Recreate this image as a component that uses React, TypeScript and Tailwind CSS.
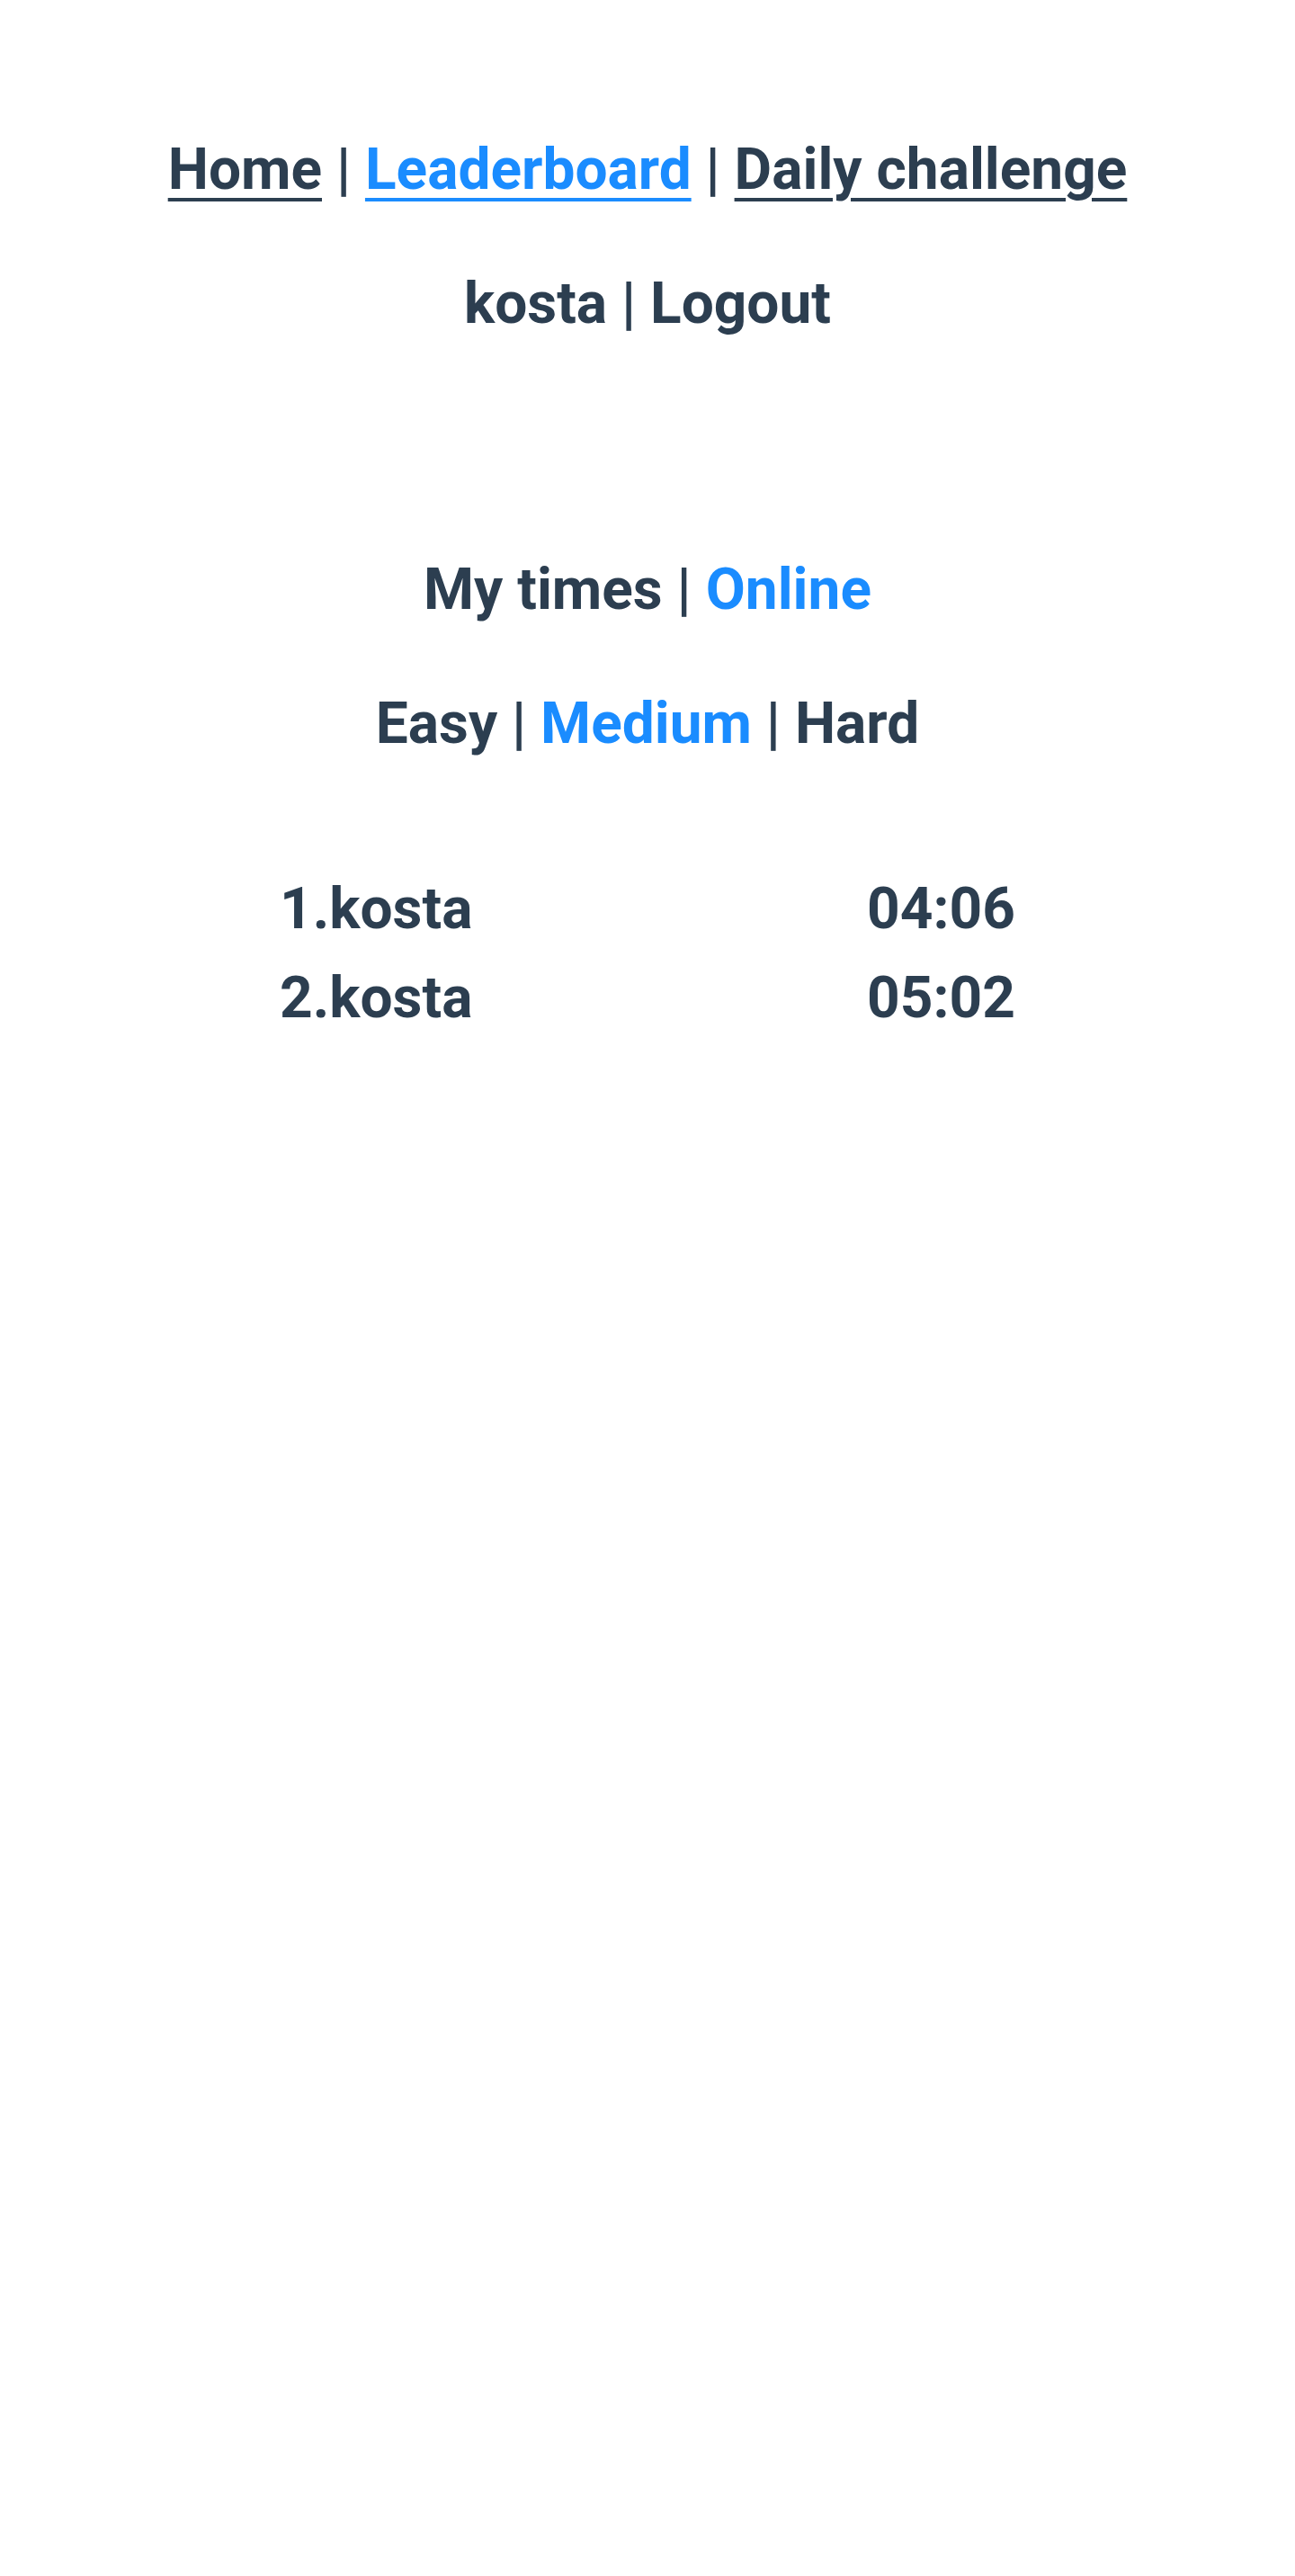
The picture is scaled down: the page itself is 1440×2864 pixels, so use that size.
export default function App() {
  const rows = [
    { name: "kosta", time: "04:06" },
    { name: "kosta", time: "05:02" },
  ];

  return (
    <div className="min-h-[2864px] bg-white text-[#2c3e50] font-bold text-center text-[64px] leading-[72px]" style={{ fontFamily: "Roboto, 'Noto Sans', sans-serif" }}>
      <div className="pt-[153px]">
        <div>
          <a className="underline decoration-[4px] underline-offset-[10px]">Home</a> | <a className="underline decoration-[4px] underline-offset-[10px] text-[#1a8cff]">Leaderboard</a> | <a className="underline decoration-[4px] underline-offset-[10px]">Daily challenge</a>
        </div>
        <div className="mt-[77px]">
          kosta | Logout
        </div>
      </div>

      <div className="mt-[246px]">
        <div>
          My times | <span className="text-[#1a8cff]">Online</span>
        </div>
        <div className="mt-[77px]">
          Easy | <span className="text-[#1a8cff]">Medium</span> | Hard
        </div>
      </div>

      <div className="mt-[134px] w-[818px] mx-auto flex flex-col gap-[27px]">
        {rows.map((r, i) => (
          <div key={i} className="flex justify-between">
            <span>{i + 1}.{r.name}</span>
            <span>{r.time}</span>
          </div>
        ))}
      </div>
    </div>
  );
}
